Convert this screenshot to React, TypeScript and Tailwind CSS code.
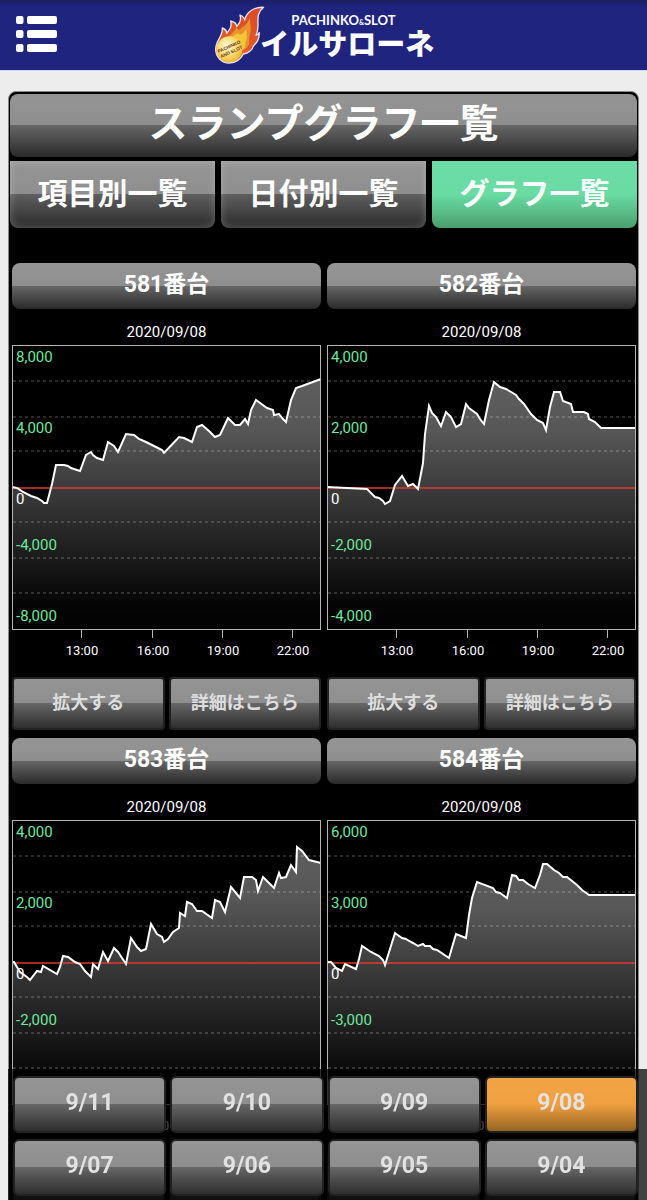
import React from 'react';

const tabs = [
  { label: '項目別一覧', active: false },
  { label: '日付別一覧', active: false },
  { label: 'グラフ一覧', active: true },
];

const dates = ['9/11', '9/10', '9/09', '9/08', '9/07', '9/06', '9/05', '9/04'];

const machines = [
  {
    no: 581,
    max: 8000,
    points:
      '0,142 5,143 11,147 19,151 25,153 30,156 32,158 35,158 40,139 44,120 52,120 56,121 59,123 68,126 74,110 79,107 81,110 85,113 91,115 96,97 102,101 106,107 114,89 122,90 127,94 134,97 142,101 150,105 152,108 167,92 172,93 180,97 185,82 190,80 197,86 203,92 208,90 216,73 223,80 228,80 233,74 236,79 239,65 244,55 255,63 261,65 262,70 267,69 271,74 274,77 279,55 284,43 290,41 309,34',
  },
  {
    no: 582,
    max: 4000,
    points:
      '0,142 40,144 48,152 52,153 56,156 58,159 63,156 68,140 75,131 81,141 86,139 91,144 96,118 98,89 102,61 105,68 109,72 114,81 119,67 124,72 129,82 134,79 139,59 142,63 146,66 150,69 153,74 157,79 162,55 167,37 173,42 179,44 189,50 192,54 197,59 204,69 210,75 216,78 219,85 223,62 227,47 233,47 236,56 244,59 246,67 257,67 261,69 262,74 268,77 274,83 309,83',
  },
  {
    no: 583,
    max: 4000,
    points:
      '0,142 2,142 8,152 15,157 18,160 25,151 29,152 31,146 45,154 48,147 51,136 56,137 63,142 68,144 73,151 79,157 81,144 86,149 91,132 96,141 102,128 106,132 114,144 119,118 125,127 129,131 134,129 139,104 145,114 150,117 152,122 156,119 161,112 167,108 168,93 173,96 175,82 180,84 185,91 190,91 200,98 203,80 208,82 213,92 219,67 228,78 232,57 240,57 244,60 246,71 251,57 262,68 267,53 269,58 274,57 279,45 284,52 285,27 290,31 297,40 309,43',
  },
  {
    no: 584,
    max: 6000,
    points:
      '0,142 4,142 9,148 15,151 18,144 29,149 32,139 35,126 44,132 52,136 56,140 58,145 63,129 68,113 75,118 79,119 82,121 86,123 91,126 96,124 98,126 103,126 106,129 110,130 122,138 126,124 129,114 139,118 142,95 145,78 150,62 166,68 169,72 173,73 180,78 185,55 189,56 192,60 196,60 201,64 208,68 213,55 216,44 220,44 227,50 232,53 236,57 240,57 250,65 255,70 262,75 309,75',
  },
];

const gridLines = [36, 72, 106, 177, 213, 248];
const hours = [
  { label: '13:00', x: 70 },
  { label: '16:00', x: 141 },
  { label: '19:00', x: 211 },
  { label: '22:00', x: 281 },
];

const Logo = () => (
  <svg viewBox="-5 0 750 210" className="h-[70px] w-[250px]" role="img" aria-label="PACHINKO&SLOT イルサローネ">
    <defs>
      <radialGradient id="ball" cx="0.42" cy="0.38" r="0.65">
        <stop offset="0" stopColor="#fffbe0" />
        <stop offset="0.45" stopColor="#fbe38a" />
        <stop offset="1" stopColor="#efb62c" />
      </radialGradient>
      <linearGradient id="flame" x1="0.6" y1="0" x2="0.3" y2="1">
        <stop offset="0" stopColor="#dc4a26" />
        <stop offset="0.7" stopColor="#e25a28" />
        <stop offset="1" stopColor="#f08a2c" />
      </linearGradient>
    </defs>
    <path
      d="M48 132C52 118 66 106 65 84C76 88 78 94 78 100C88 88 94 80 90 63C104 66 108 72 108 80C118 68 122 60 118 45C128 50 132 54 132 60C136 40 156 20 189 22C168 38 172 58 172 74C172 90 170 98 166 106C170 106 174 102 176 98C176 122 166 130 158 138C156 150 142 160 128 162C118 182 104 189 86 189C62 189 45 170 45 148C45 142 46 137 48 132Z"
      fill="url(#flame)"
      stroke="#e9e4f0"
      strokeWidth="4"
      strokeLinejoin="round"
    />
    <path d="M80 114C92 100 104 92 108 80C112 92 116 92 122 84C134 78 142 66 148 54C148 76 154 92 146 108C144 120 150 130 140 142L124 154Z" fill="#e8922f" />
    <path d="M92 112C104 104 112 96 118 104C126 104 132 94 138 88C136 104 142 116 134 128C136 136 134 142 126 150Z" fill="#f6c437" />
    <circle cx="86" cy="148" r="39" fill="url(#ball)" />
    <g fill="#6b2f14" fontFamily="Liberation Sans, sans-serif" fontWeight="700" fontSize="14" transform="rotate(-24 88 146)">
      <text x="88" y="144" textAnchor="middle">PACHINKO</text>
      <text x="88" y="161" textAnchor="middle">AND SLOT</text>
    </g>
    <text x="272" y="76" fontSize="39" fill="#ffffff" fontFamily="Lato, sans-serif" fontWeight="700">
      PACHINKO<tspan fontSize="21">&amp;</tspan>SLOT
    </text>
    <text x="179" y="166" fontSize="87" fontWeight="900" fill="#ffffff" fontFamily="'Noto Sans CJK JP', sans-serif">
      イルサローネ
    </text>
  </svg>
);

const Header = () => (
  <header className="grid h-[71px] grid-cols-[1fr_auto_1fr] items-start border-b border-[#d5d7ea] bg-linear-to-b from-[#1c1f66] to-[#1f247f] to-10%">
    <button type="button" aria-label="メニュー" className="mt-4 ml-4 h-9 w-[41px] cursor-pointer">
      <svg viewBox="0 0 41 36" className="h-9 w-[41px]" fill="#ffffff">
        {[0, 14, 28].map((y) => (
          <g key={y}>
            <rect x="0" y={y} width="7.5" height="8" rx="2" />
            <rect x="11" y={y} width="30" height="8" rx="2" />
          </g>
        ))}
      </svg>
    </button>
    <a href="#top">
      <Logo />
    </a>
  </header>
);

const SlumpGraph = ({ no, max, points }: { no: number; max: number; points: string }) => {
  const format = (n: number) => n.toLocaleString('en-US');
  const labels = [
    { text: format(max), y: 17 },
    { text: format(max / 2), y: 88 },
    { text: '0', y: 159 },
    { text: format(-max / 2), y: 205 },
    { text: format(-max), y: 276 },
  ];

  return (
    <svg viewBox="0 0 309 320" className="block w-full overflow-visible" role="img" aria-label={`${no}番台 スランプグラフ`}>
      <defs>
        <linearGradient id={`area-${no}`} x1="0" y1="0" x2="0" y2="1">
          <stop offset="0" stopColor="#ffffff" stopOpacity="0.37" />
          <stop offset="0.2" stopColor="#ffffff" stopOpacity="0.34" />
          <stop offset="0.9" stopColor="#ffffff" stopOpacity="0.02" />
          <stop offset="1" stopColor="#ffffff" stopOpacity="0" />
        </linearGradient>
      </defs>
      {gridLines.map((y) => (
        <path key={y} d={`M1 ${y}H308`} stroke="#555555" strokeDasharray="3 3" />
      ))}
      <polygon points={`0,285 ${points} 309,285`} fill={`url(#area-${no})`} />
      <path d="M1 143H308" stroke="#e83a2e" strokeOpacity="0.72" strokeWidth="2" />
      <polyline points={points} fill="none" stroke="#ffffff" strokeWidth="2" />
      <rect x="0.5" y="0.5" width="308" height="284" fill="none" stroke="#b5b5b5" />
      {labels.map(({ text, y }) => (
        <text key={text} x="4" y={y} fontSize="15" fill={text === '0' ? '#ffffff' : '#6ee79b'}>
          {text}
        </text>
      ))}
      {hours.map(({ label, x }) => (
        <g key={label}>
          <path d={`M${x - 0.5} 285v8`} stroke="#b5b5b5" />
          <text x={x} y="310" fontSize="13" fill="#ffffff" textAnchor="middle">
            {label}
          </text>
        </g>
      ))}
    </svg>
  );
};

const MachineCard = ({ no, max, points }: { no: number; max: number; points: string }) => (
  <section className="pb-2">
    <h2 className="flex h-[46px] items-center justify-center rounded-lg bg-[linear-gradient(#959595,#8e8e8e_49%,#666666_50%,#2a2a2a)] pb-0.5 text-[23px] font-bold text-white">
      {no}番台
    </h2>
    <p className="flex h-9 items-center justify-center pt-2.5 text-[15px] text-white">2020/09/08</p>
    <SlumpGraph no={no} max={max} points={points} />
    <div className="mt-3 grid grid-cols-2 gap-1">
      {['拡大する', '詳細はこちら'].map((label) => (
        <button
          key={label}
          type="button"
          className="h-[53px] cursor-pointer rounded-sm border-2 border-[#222222] bg-[linear-gradient(#959595,#8e8e8e_49%,#666666_50%,#2a2a2a)] bg-origin-border pb-0.5 text-lg font-bold text-[#dddddd]"
        >
          {label}
        </button>
      ))}
    </div>
  </section>
);

const DateBar = () => (
  <nav className="fixed right-0 bottom-0 left-2 grid grid-cols-4 gap-x-1 gap-y-1.5 bg-black/72 pt-[7px] pr-[9px] pb-1 pl-[5px]">
    {dates.map((date) => (
      <button
        key={date}
        type="button"
        className={`h-[57px] cursor-pointer rounded-md border-2 border-[#222222] bg-origin-border pb-0.5 text-[23px] font-bold text-[#e2e2e2] ${
          date === '9/08'
            ? 'bg-[linear-gradient(#f2a444,#ef9f40_50%,#8f6020)]'
            : 'bg-[linear-gradient(#959595,#8e8e8e_49%,#666666_50%,#2a2a2a)]'
        }`}
      >
        {date}
      </button>
    ))}
  </nav>
);

const App = () => (
  <div className="min-h-screen bg-[#ededed] font-[Roboto,'Noto_Sans_CJK_JP',sans-serif]">
    <Header />
    <main className="mx-2 mt-5 rounded-t-lg border border-[#8a8a8a] bg-black pt-0.5">
      <h1 className="mx-px flex h-[63px] items-center justify-center rounded-lg bg-[linear-gradient(#959595,#8e8e8e_49%,#666666_50%,#2a2a2a)] pb-0.5 text-[39px] font-bold text-white">
        スランプグラフ一覧
      </h1>
      <div className="mx-px mt-1 grid grid-cols-3 gap-1.5">
        {tabs.map(({ label, active }) => (
          <a
            key={label}
            href="#graph"
            className={`flex h-[67px] items-center justify-center rounded-b-lg pb-0.5 text-[30px] font-bold text-white ${
              active
                ? 'bg-[linear-gradient(#6bdca5,#69dba3_50%,#4a9f6d)]'
                : 'bg-[linear-gradient(#959595,#8e8e8e_49%,#5e5e5e_50%,#2a2a2a)] shadow-[inset_0_0_8px_rgba(255,255,255,0.25)]'
            }`}
          >
            {label}
          </a>
        ))}
      </div>
      <div className="mt-[35px] grid grid-cols-2 gap-x-1.5 pr-0.5 pl-[3px]">
        {machines.map((machine) => (
          <MachineCard key={machine.no} {...machine} />
        ))}
      </div>
    </main>
    <DateBar />
  </div>
);

export default App;
